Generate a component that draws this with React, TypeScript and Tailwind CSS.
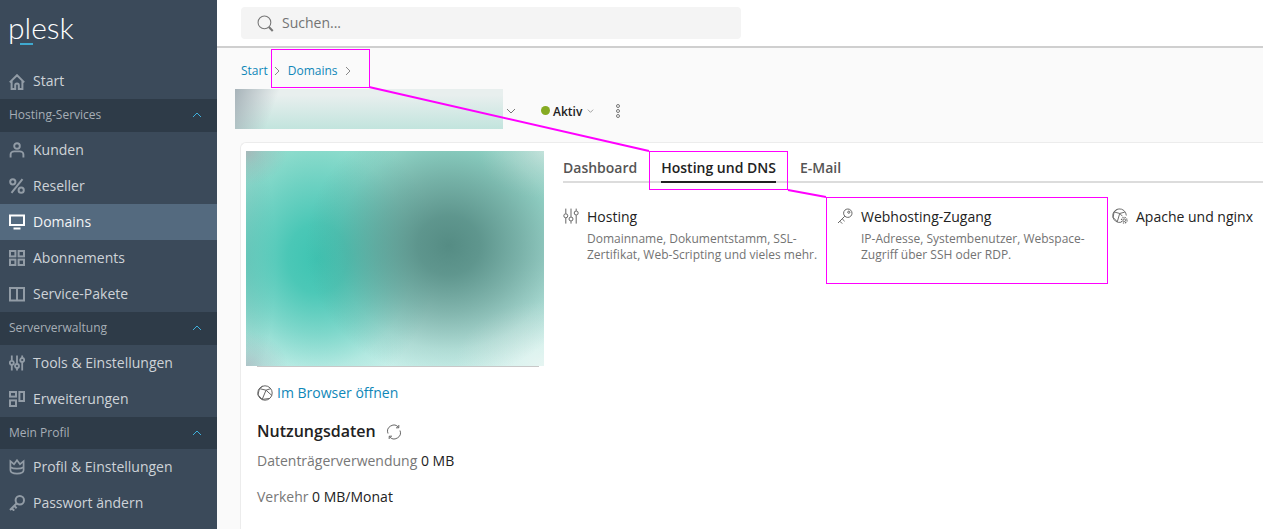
import React from "react";

const Svg = ({ children, className = "", sw = 1.6 }: { children: React.ReactNode; className?: string; sw?: number }) => (
  <svg viewBox="0 0 16 16" fill="none" stroke="currentColor" strokeWidth={sw} className={className}>
    {children}
  </svg>
);

const HomeI = (p: { className?: string }) => (
  <Svg {...p} sw={2}>
    <path d="M.8 8.4 8 1.2l7.2 7.2M2.6 6.8v8.2h3.6v-3.8a1.8 1.8 0 0 1 3.6 0V15h3.6V6.8" />
  </Svg>
);
const UserI = (p: { className?: string }) => (
  <Svg {...p} sw={1.9}>
    <circle cx="8" cy="4" r="2.8" />
    <path d="M1.6 15.4v-2.8c0-2 1.8-3.2 3.6-3.2h5.6c1.8 0 3.6 1.2 3.6 3.2v2.8" />
  </Svg>
);
const PercentI = (p: { className?: string }) => (
  <Svg {...p} sw={2}>
    <circle cx="3.8" cy="3.8" r="2.6" />
    <circle cx="12.2" cy="12.2" r="2.6" />
    <path d="M13.5 1.2 2.5 14.8" />
  </Svg>
);
const MonitorI = (p: { className?: string }) => (
  <Svg {...p} sw={2}>
    <rect x="1" y="1.5" width="14" height="9.5" />
    <path d="M4.5 14.5h7" />
  </Svg>
);
const GridI = (p: { className?: string }) => (
  <Svg {...p} sw={2}>
    <rect x="1" y="1" width="5.4" height="5.4" />
    <rect x="9.6" y="1" width="5.4" height="5.4" />
    <rect x="1" y="9.6" width="5.4" height="5.4" />
    <rect x="9.6" y="9.6" width="5.4" height="5.4" />
  </Svg>
);
const BookI = (p: { className?: string }) => (
  <Svg {...p} sw={2}>
    <path d="M1 2h14v12.4H1zM8 2v12.4" />
  </Svg>
);
const SlidersI = ({ className = "", sw = 1.8 }: { className?: string; sw?: number }) => (
  <Svg className={className} sw={sw}>
    <path d="M2.8 .6v5M2.8 10v5.6M8 .6v8.2M8 13.2v2.4M13.2 .6v2.2M13.2 7.2v8.4" />
    <circle cx="2.8" cy="7.8" r="2" />
    <circle cx="8" cy="11" r="2" />
    <circle cx="13.2" cy="5" r="2" />
  </Svg>
);
const ExtI = (p: { className?: string }) => (
  <Svg {...p} sw={2}>
    <rect x="1" y="1" width="6" height="4.6" />
    <rect x="1" y="9.4" width="6" height="5.6" />
    <rect x="10.4" y="1" width="4.6" height="9" />
  </Svg>
);
const CrownI = (p: { className?: string }) => (
  <Svg {...p} sw={1.7}>
    <path d="M1.4 2.2 5 5.2 8 1.2l3 4 3.6-3v8.8c0 2.6-3 3.6-6.6 3.6s-6.6-1-6.6-3.6z" />
    <path d="M1.4 8.2c1.6 1 4.1 1.4 6.6 1.4s5-.4 6.6-1.4" />
  </Svg>
);
const KeyI = ({ className = "", sw = 2 }: { className?: string; sw?: number }) => (
  <Svg className={className} sw={sw}>
    <circle cx="10.8" cy="5.2" r="4.2" />
    <path d="M7.8 8.2 1 15M2.8 13.2l2.4 2.4M5.2 10.8l2.4 2.4" />
    {sw < 1.5 && <circle cx="11.8" cy="4.2" r="1.1" />}
  </Svg>
);
const GlobeI = ({ className = "" }: { className?: string }) => (
  <Svg className={className} sw={1}>
    <circle cx="8" cy="8" r="7.2" />
    <path d="M2.4 3.6 9 5.2l4.8-1.6M9 5.2 5.2 14.4M9 5.2l6 5.4M2.4 3.6 1 9.8l4.2 4.6M5.8 1.2 2.4 3.6M5.2 14.4l7.8-1" />
  </Svg>
);
const GlobeGearI = ({ className = "" }: { className?: string }) => (
  <svg viewBox="0 0 17 17" fill="none" stroke="currentColor" strokeWidth="1" className={className}>
    <path d="M9.5 15.2A7.2 7.2 0 1 1 15.2 8" />
    <path d="M2.2 4.2 8.2 5.8l5.4-1.4M8.2 5.8 5.6 14.6M2.2 4.2 1.2 10l4.4 4.6M5.6 1.4l-3.4 2.8M8.2 5.8l3 3" />
    <circle cx="13" cy="13" r="1.4" />
    <circle cx="13" cy="13" r="3" strokeDasharray="1.3 1.05" strokeWidth="1.3" />
  </svg>
);
const SearchI = ({ className = "" }: { className?: string }) => (
  <Svg className={className} sw={1}>
    <circle cx="7" cy="7" r="6" />
    <path d="m11.2 11.4 3.6 3.6" strokeWidth="2" />
  </Svg>
);
const RefreshI = ({ className = "" }: { className?: string }) => (
  <Svg className={className} sw={1}>
    <path d="M2 9.5A6.2 6.2 0 0 1 12.6 3.4M14 6.5A6.2 6.2 0 0 1 3.4 12.6" />
    <path d="M12.8 1v2.8H10M3.2 15v-2.8H6" />
  </Svg>
);
const Chev = ({ className = "", d = "m1 1 4 4 4-4", box = "0 0 10 6" }: { className?: string; d?: string; box?: string }) => (
  <svg viewBox={box} fill="none" stroke="currentColor" strokeWidth="1" className={className}>
    <path d={d} />
  </svg>
);

const NavItem = ({ icon: Icon, label, active }: { icon: React.ComponentType<{ className?: string }>; label: string; active?: boolean }) => (
  <div className={`flex h-9 items-center gap-2 pl-[9px] text-[14px] ${active ? "bg-[#546a7f] text-[#f2f4f6]" : "text-[#ced3d8]"}`}>
    <Icon className={`h-4 w-4 shrink-0 ${active ? "text-white" : "text-[#929ca6]"}`} />
    <span className="mb-[2px]">{label}</span>
  </div>
);

const Section = ({ label, h }: { label: string; h: string }) => (
  <div className={`flex items-center justify-between bg-[#2e3b48] pl-[9px] pr-[15px] text-[12px] text-[#a6aeb6] ${h}`}>
    <span>{label}</span>
    <Chev d="m1 5 4-4 4 4" className="h-[6px] w-[10px] text-[#3fb0dc]" />
  </div>
);

const Feature = ({ icon, title, desc, w }: { icon: React.ReactNode; title: string; desc?: string; w: string }) => (
  <div className={`flex shrink-0 gap-2 ${w}`}>
    <div className="mt-[1px] shrink-0 text-[#666]">{icon}</div>
    <div className="min-w-0">
      <div className="whitespace-nowrap text-[14px] leading-5 text-[#222]">{title}</div>
      {desc && <p className="mt-[4px] text-[12px] leading-4 text-[#737373]">{desc}</p>}
    </div>
  </div>
);

export default function App() {
  return (
    <div className="relative flex h-[529px] w-full overflow-hidden bg-[#fafafa] font-['Open_Sans',sans-serif]">
      <aside className="flex w-[217px] shrink-0 flex-col bg-[#3b4a5a]">
        <div className="relative h-[64px] shrink-0">
          <span className="absolute left-[8px] top-[5px] font-['Lato',sans-serif] text-[30px] font-light leading-[45px] text-white">plesk</span>
          <span className="absolute left-[20px] top-[43px] h-[2px] w-[13px] bg-[#3fa9cf]" />
        </div>
        <div className="h-[35px] [&>div]:h-[35px]">
          <NavItem icon={HomeI} label="Start" />
        </div>
        <Section label="Hosting-Services" h="h-[33px] pb-[2px]" />
        <NavItem icon={UserI} label="Kunden" />
        <NavItem icon={PercentI} label="Reseller" />
        <NavItem icon={MonitorI} label="Domains" active />
        <NavItem icon={GridI} label="Abonnements" />
        <NavItem icon={BookI} label="Service-Pakete" />
        <Section label="Serververwaltung" h="h-[33px] pb-[2px]" />
        <NavItem icon={SlidersI} label="Tools & Einstellungen" />
        <NavItem icon={ExtI} label="Erweiterungen" />
        <Section label="Mein Profil" h="h-[32px]" />
        <NavItem icon={CrownI} label="Profil & Einstellungen" />
        <NavItem icon={KeyI} label="Passwort ändern" />
      </aside>

      <main className="min-w-0 flex-1">
        <header className="flex h-[48px] items-start border-b-2 border-[#cfcfcf] bg-white pl-[24px] pt-[7px]">
          <div className="flex h-[32px] w-[500px] items-center gap-[8px] rounded bg-[#f4f4f4] pl-[16px] text-[14px] text-[#737373]">
            <SearchI className="h-[17px] w-[17px] text-[#777]" />
            <span className="mb-[2px]">Suchen...</span>
          </div>
        </header>

        <nav className="flex h-[41px] items-center pl-[24px] pt-[4px] text-[12px] text-[#0f87b8]">
          <span>Start</span>
          <Chev box="0 0 6 10" d="m1 1 4 4-4 4" className="ml-[6px] mr-[8px] h-[10px] w-[6px] text-[#888]" />
          <span>Domains</span>
          <Chev box="0 0 6 10" d="m1 1 4 4-4 4" className="ml-[7px] h-[10px] w-[6px] text-[#888]" />
        </nav>

        <div className="flex h-[40px] items-center pl-[18px]">
          <div className="h-[40px] w-[268px] bg-[linear-gradient(110deg,#a7b3b9_0%,rgba(167,179,185,0)_16%),linear-gradient(to_bottom,#e8efee_15%,#c2e4dd_100%)]" />
          <Chev className="ml-[3px] mt-[3px] h-[6px] w-[10px] text-[#777]" />
          <span className="ml-[25px] mt-[3px] h-[9px] w-[9px] rounded-full bg-[#86ab22]" />
          <span className="ml-[3px] mt-[6px] text-[12px] font-semibold text-[#222]">Aktiv</span>
          <Chev className="ml-[5px] mt-[3px] h-[4px] w-[7px] text-[#777]" />
          <div className="ml-[22px] mt-[4px] flex flex-col gap-[1px]">
            <span className="h-[4px] w-[4px] rounded-full border border-[#777]" />
            <span className="h-[4px] w-[4px] rounded-full border border-[#777]" />
            <span className="h-[4px] w-[4px] rounded-full border border-[#777]" />
          </div>
        </div>

        <section className="ml-[23px] mt-[13px] flex h-[400px] rounded-tl-md border-l border-t border-[#ececec] bg-white pl-[5px] pt-[8px]">
          <div className="w-[298px] shrink-0">
            <div className="h-[215px] w-[298px] bg-[radial-gradient(ellipse_48%_62%_at_68%_44%,rgba(85,140,132,1)_0%,rgba(85,140,132,0.88)_22%,rgba(85,140,132,0.55)_50%,rgba(85,140,132,0.18)_78%,rgba(85,140,132,0)_100%),radial-gradient(ellipse_40%_64%_at_24%_50%,rgba(62,196,178,1)_0%,rgba(62,196,178,0.88)_25%,rgba(62,196,178,0.5)_55%,rgba(62,196,178,0.15)_80%,rgba(62,196,178,0)_100%),radial-gradient(ellipse_14%_16%_at_0%_0%,#a8b8ba_0%,rgba(168,184,186,0.5)_40%,rgba(168,184,186,0)_100%),radial-gradient(ellipse_14%_16%_at_0%_100%,#b0c4c8_0%,rgba(176,196,200,0.5)_40%,rgba(176,196,200,0)_100%),radial-gradient(ellipse_30%_30%_at_100%_100%,#e6f5f2_0%,rgba(230,245,242,0)_100%),radial-gradient(ellipse_22%_22%_at_100%_0%,#c6e4dd_0%,rgba(198,228,221,0)_100%),radial-gradient(ellipse_10%_60%_at_0%_50%,#86c8bf_0%,rgba(134,200,191,0)_100%),linear-gradient(to_bottom,#98dfd0_0%,#a8dfd6_50%,#c9f0ea_100%)]" />
            <div className="ml-[11px] h-px w-[282px] bg-[#c8c8c8]" />
            <a className="ml-[11px] mt-[16px] flex items-center gap-[4px] text-[14px] leading-5 text-[#0f87b8]">
              <GlobeI className="h-4 w-4 text-[#666]" />
              <span>Im Browser öffnen</span>
            </a>
            <div className="ml-[11px] mt-[17px] flex items-center gap-[10px]">
              <h2 className="text-[16px] font-semibold leading-[22px] text-[#222]">Nutzungsdaten</h2>
              <RefreshI className="mt-[2px] h-4 w-4 text-[#666]" />
            </div>
            <p className="ml-[11px] mt-[9px] text-[14px] leading-5 text-[#777]">
              Datenträgerverwendung <span className="text-[#222]">0 MB</span>
            </p>
            <p className="ml-[11px] mt-[16px] text-[14px] leading-5 text-[#777]">
              Verkehr <span className="text-[#222]">0 MB/Monat</span>
            </p>
          </div>

          <div className="ml-[19px] min-w-0 flex-1">
            <div className="flex h-[32px] gap-[24px] border-b-2 border-[#dcdcdc] pt-[7px] text-[14px] font-semibold leading-5">
              <span className="text-[#555]">Dashboard</span>
              <span className="h-[25px] border-b-2 border-[#222] text-[#222]">Hosting und DNS</span>
              <span className="text-[#555]">E-Mail</span>
            </div>
            <div className="mt-[24px] flex">
              <Feature
                w="w-[274px] pr-[16px]"
                icon={<SlidersI className="h-4 w-4" sw={1} />}
                title="Hosting"
                desc="Domainname, Dokumentstamm, SSL-Zertifikat, Web-Scripting und vieles mehr."
              />
              <Feature
                w="w-[275px] pr-[16px]"
                icon={<KeyI className="h-4 w-4" sw={1} />}
                title="Webhosting-Zugang"
                desc="IP-Adresse, Systembenutzer, Webspace-Zugriff über SSH oder RDP."
              />
              <Feature w="w-[160px]" icon={<GlobeGearI className="h-4 w-4" />} title="Apache und nginx" />
            </div>
          </div>
        </section>
      </main>

      <div className="pointer-events-none absolute left-[271px] top-[49px] h-[39px] w-[99px] border border-[#ff00ff]" />
      <div className="pointer-events-none absolute left-[649px] top-[151px] h-[39px] w-[139px] border border-[#ff00ff]" />
      <div className="pointer-events-none absolute left-[826px] top-[197px] h-[87px] w-[282px] border border-[#ff00ff]" />
      <svg className="pointer-events-none absolute left-0 top-0 h-[529px] w-[1263px]" viewBox="0 0 1263 529" fill="none">
        <path d="M369 87 649 151M788 190l38 7" stroke="#ff00ff" strokeWidth="2" />
      </svg>
    </div>
  );
}
